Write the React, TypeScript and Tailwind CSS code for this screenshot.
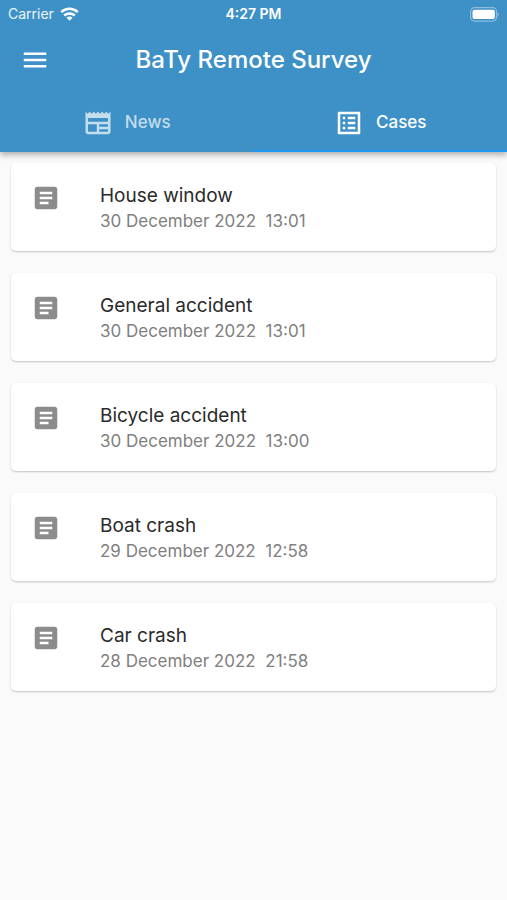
import { useState } from "react"
import { MdArticle, MdListAlt, MdMenu, MdNewspaper } from "react-icons/md"
import clsx from "clsx"

type Case = {
  id: number
  title: string
  date: string
  time: string
}

const cases: Case[] = [
  { id: 1, title: "House window", date: "30 December 2022", time: "13:01" },
  { id: 2, title: "General accident", date: "30 December 2022", time: "13:01" },
  { id: 3, title: "Bicycle accident", date: "30 December 2022", time: "13:00" },
  { id: 4, title: "Boat crash", date: "29 December 2022", time: "12:58" },
  { id: 5, title: "Car crash", date: "28 December 2022", time: "21:58" }
]

const tabs = [
  { id: "news", label: "News", Icon: MdNewspaper },
  { id: "cases", label: "Cases", Icon: MdListAlt }
]

export default function App() {
  const [currentTab, setCurrentTab] = useState("cases")

  return (
    <div className="min-h-screen bg-[#fafafa] font-['Inter',sans-serif]">
      <header className="relative bg-[#3e91c7] text-white shadow-[0_3px_6px_rgba(0,0,0,0.3)]">
        <StatusBar />
        <div className="grid h-16 grid-cols-[70px_1fr_70px] items-center">
          <button type="button" aria-label="Open menu" className="flex justify-center">
            <MdMenu size={30} />
          </button>
          <h1 className="text-center text-2xl font-medium whitespace-nowrap">BaTy Remote Survey</h1>
        </div>
        <div role="tablist" className="grid grid-cols-2">
          {tabs.map(({ id, label, Icon }) => (
            <button
              key={id}
              type="button"
              role="tab"
              aria-selected={currentTab === id}
              onClick={() => setCurrentTab(id)}
              className={clsx(
                "flex h-15 items-center justify-center gap-3 border-b-2 pt-[3px] text-[17px] font-medium",
                currentTab === id ? "border-[#2196f3] text-white" : "border-transparent text-white/70"
              )}
            >
              <Icon size={30} />
              {label}
            </button>
          ))}
        </div>
      </header>
      <main>
        {currentTab === "cases" && (
          <ul className="flex flex-col gap-[22px] px-[11px] pt-[11px]">
            {cases.map((item) => (
              <CaseCard key={item.id} {...item} />
            ))}
          </ul>
        )}
      </main>
    </div>
  )
}

const StatusBar = () => {
  return (
    <div className="grid h-7 grid-cols-3 items-center px-2 text-sm">
      <div className="flex items-center gap-1.5">
        <span className="text-white/90">Carrier</span>
        <svg width="19" height="14" viewBox="0 0 19 14" fill="none" stroke="currentColor" strokeWidth="2.5">
          <path d="M1.2 5.2C6 .7 13 .7 17.8 5.2" />
          <path d="M4.2 8.5c3-2.8 7.6-2.8 10.6 0" />
          <path d="M9.5 13.7 6.5 10.7c1.7-1.5 4.3-1.5 6 0z" fill="currentColor" stroke="none" />
        </svg>
      </div>
      <span className="text-center font-semibold">4:27 PM</span>
      <svg className="justify-self-end" width="29" height="15" viewBox="0 0 29 15" fill="none">
        <rect x="0.6" y="0.7" width="26" height="13.4" rx="4" stroke="white" strokeOpacity="0.4" strokeWidth="1.2" />
        <rect x="2.5" y="2.7" width="22.4" height="9.4" rx="2" fill="white" />
        <path d="M27.6 5c1.4.8 1.4 4 0 4.8z" fill="white" fillOpacity="0.5" />
      </svg>
    </div>
  )
}

const CaseCard = ({ title, date, time }: Case) => {
  return (
    <li className="flex h-22 items-start gap-[39px] rounded-[5px] bg-white px-5 pt-5 shadow-[0_1px_2px_rgba(0,0,0,0.22)]">
      <MdArticle size={30} className="shrink-0 text-[#8c8c8c]" />
      <div className="min-w-0">
        <h2 className="text-[19px] leading-[26px] text-[#2a2a2a]">{title}</h2>
        <p className="text-[17px] leading-6 whitespace-pre text-[#808080]">
          {date}
          {"  "}
          {time}
        </p>
      </div>
    </li>
  )
}
